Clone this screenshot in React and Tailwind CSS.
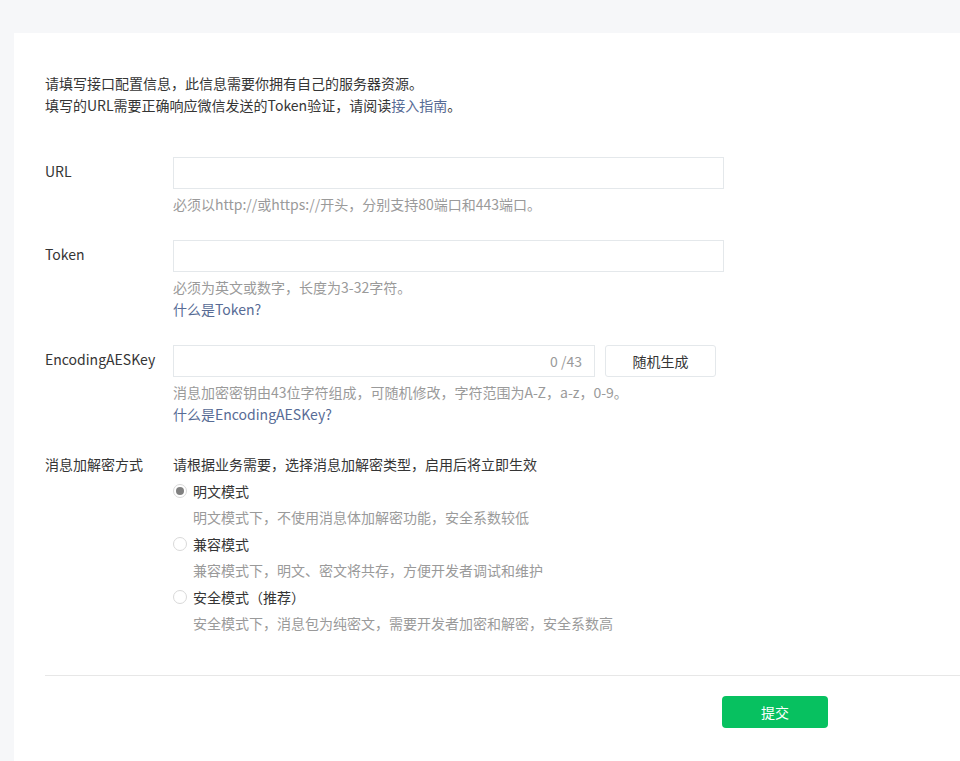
import { useState } from "react";

const modes = [
  { key: "plain", label: "明文模式", desc: "明文模式下，不使用消息体加解密功能，安全系数较低" },
  { key: "compat", label: "兼容模式", desc: "兼容模式下，明文、密文将共存，方便开发者调试和维护" },
  { key: "safe", label: "安全模式（推荐）", desc: "安全模式下，消息包为纯密文，需要开发者加密和解密，安全系数高" },
];

const Row = ({ label, children, className = "" }) => (
  <div className={`flex ${className}`}>
    <div className="w-[128px] shrink-0 leading-[28px] text-[#353535]">{label}</div>
    <div className="flex-1">{children}</div>
  </div>
);

const App = () => {
  const [mode, setMode] = useState("plain");
  const [aesKey, setAesKey] = useState("");

  return (
    <div
      className="w-[960px] h-[761px] overflow-hidden bg-[#f6f7f9] pt-[33px] pl-[14px] text-[14px]"
      style={{ fontFamily: '"Noto Sans CJK SC", "Noto Sans", sans-serif' }}
    >
      <div className="w-[1000px] h-[800px] bg-white pl-[31px] pt-[39px]">
        <div className="leading-[22px] text-[#353535]">
          <p>请填写接口配置信息，此信息需要你拥有自己的服务器资源。</p>
          <p>
            填写的URL需要正确响应微信发送的Token验证，请阅读
            <a className="text-[#576b95]">接入指南</a>。
          </p>
        </div>

        <Row label="URL" className="mt-[41px]">
          <input className="block w-[551px] h-[32px] border border-[#e4e8eb] px-3 outline-none" />
          <p className="mt-[4px] leading-[22px] text-[#9a9a9a]">
            必须以http://或https://开头，分别支持80端口和443端口。
          </p>
        </Row>

        <Row label="Token" className="mt-[25px]">
          <input className="block w-[551px] h-[32px] border border-[#e4e8eb] px-3 outline-none" />
          <p className="mt-[4px] leading-[22px] text-[#9a9a9a]">必须为英文或数字，长度为3-32字符。</p>
          <a className="block leading-[22px] text-[#576b95]">什么是Token?</a>
        </Row>

        <Row label="EncodingAESKey" className="mt-[25px]">
          <div className="flex gap-[10px]">
            <div className="flex items-center w-[422px] h-[32px] border border-[#e4e8eb]">
              <input
                value={aesKey}
                onChange={(e) => setAesKey(e.target.value.slice(0, 43))}
                className="flex-1 min-w-0 h-full px-3 outline-none"
              />
              <span className="pr-[12px] text-[#9a9a9a]">{aesKey.length} /43</span>
            </div>
            <button className="w-[111px] h-[32px] border border-[#e4e8eb] rounded-[3px] text-[#353535]">
              随机生成
            </button>
          </div>
          <p className="mt-[4px] leading-[22px] text-[#9a9a9a]">
            消息加密密钥由43位字符组成，可随机修改，字符范围为A-Z，a-z，0-9。
          </p>
          <a className="block leading-[22px] text-[#576b95]">什么是EncodingAESKey?</a>
        </Row>

        <div className="flex mt-[28px]">
          <div className="w-[128px] shrink-0 leading-[22px] text-[#353535]">消息加解密方式</div>
          <div className="flex-1">
            <p className="leading-[22px] text-[#353535]">请根据业务需要，选择消息加解密类型，启用后将立即生效</p>
            {modes.map((m) => (
              <div key={m.key} className="mt-[5px]">
                <label className="flex items-center gap-[6px] leading-[22px] text-[#353535] cursor-pointer" onClick={() => setMode(m.key)}>
                  <span className="w-[14px] h-[14px] rounded-full border border-[#d9d9d9] flex items-center justify-center">
                    {mode === m.key && <span className="w-[8px] h-[8px] rounded-full bg-[#808080]" />}
                  </span>
                  {m.label}
                </label>
                <p className="mt-[4px] pl-[20px] leading-[22px] text-[#9a9a9a]">{m.desc}</p>
              </div>
            ))}
          </div>
        </div>

        <div className="mt-[41px] border-t border-[#e7e7e7]" />

        <div className="pt-[20px] pl-[677px]">
          <button className="w-[106px] h-[32px] rounded-[4px] bg-[#07c160] text-white">提交</button>
        </div>
      </div>
    </div>
  );
};

export default App;
